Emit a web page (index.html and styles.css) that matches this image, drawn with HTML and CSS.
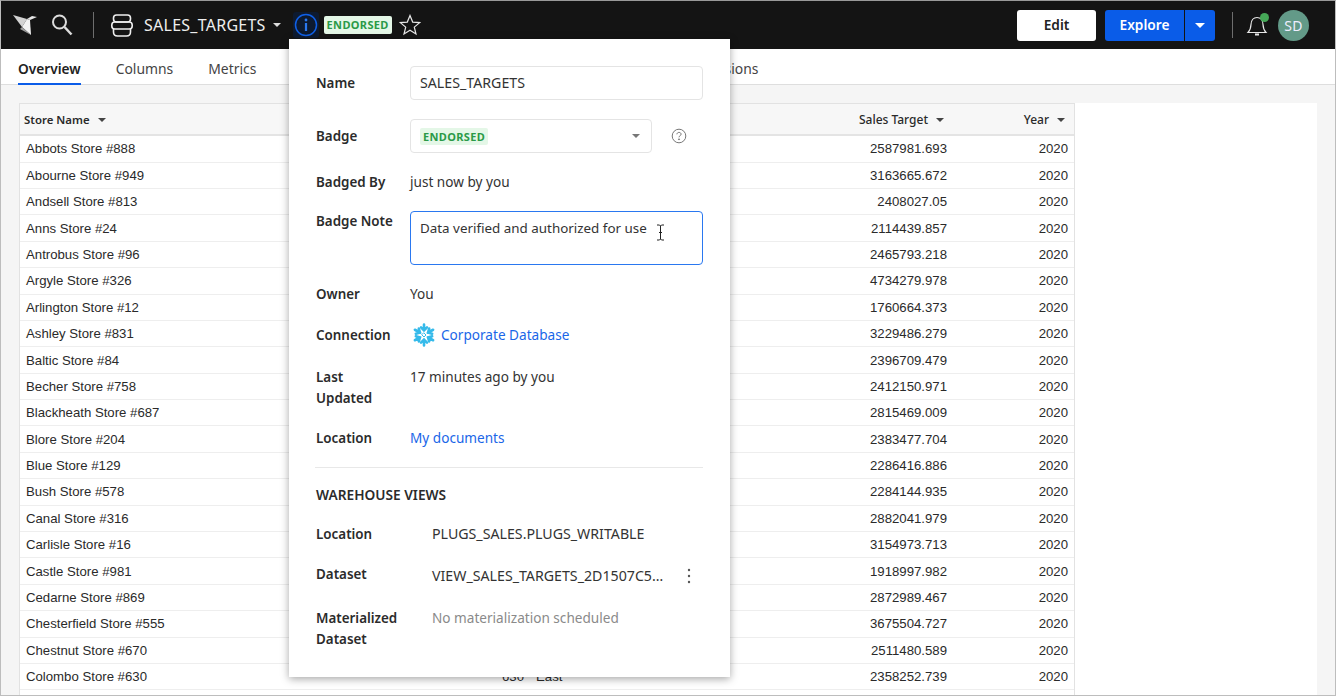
FILE: index.html
```html
<!DOCTYPE html>
<html lang="en">
<head>
<meta charset="utf-8">
<title>SALES_TARGETS</title>
<link rel="stylesheet" href="styles.css">
</head>
<body>
<div class="app">
  <header class="topbar">
    <svg class="logo" width="24" height="24" viewBox="0 0 24 24"><path d="M0 2l14 4-5 8z" fill="#d2d2d2"/><path d="M14 6l5-3 5 1-7 3z" fill="#e6e6e6"/><path d="M9 14l5-8 3 1 1 15z" fill="#f2f2f2"/><path d="M7 16l2-2 9 8z" fill="#9a9a9a"/></svg>
    <svg class="search" width="24" height="24" viewBox="0 0 24 24" fill="none" stroke="#dcdcdc" stroke-width="2"><circle cx="8.500" cy="9" r="6.500"/><path d="M13.500 14l7 7.500" stroke-width="2.500"/></svg>
    <span class="vsep first"></span>
    <svg class="db" width="22" height="23" viewBox="0 0 22 23" fill="none" stroke="#eee" stroke-width="1.600"><rect x="2.500" y="1" width="17" height="7" rx="3"/><rect x=".8" y="8" width="20.400" height="7" rx="3"/><path d="M2.500 15v3q0 4 4 4h9q4 0 4-4v-3"/></svg>
    <span class="ds-name">SALES_TARGETS</span>
    <span class="caret caret-light"></span>
    <span class="info-btn"><svg width="24" height="24" viewBox="0 0 24 24" fill="none"><circle cx="12" cy="12" r="10.500" stroke="#0f5fe6" stroke-width="1.500"/><rect x="10.900" y="10" width="2.200" height="8" fill="#2a78f0"/><circle cx="12" cy="7" r="1.400" fill="#2a78f0"/></svg></span>
    <span class="badge badge-top">ENDORSED</span>
    <svg class="star" width="22" height="22" viewBox="0 0 22 22" fill="none" stroke="#e8e8e8" stroke-width="1.200"><path d="M11 1.500l2.700 6.600 7 .5-5.400 4.500 1.700 6.900-6-3.800-6 3.800 1.700-6.900L1.300 8.600l7-.5z"/></svg>
    <span class="spacer"></span>
    <button class="btn btn-edit">Edit</button>
    <div class="split">
      <button class="btn btn-explore">Explore</button>
      <button class="btn btn-more"><span class="caret caret-white"></span></button>
    </div>
    <span class="vsep second"></span>
    <span class="bell"><svg width="22" height="24" viewBox="0 0 22 24" fill="none" stroke="#e8e8e8" stroke-width="1.200"><path d="M2 19.500c2-2 2.800-4 3-8 .2-4 2.500-7 6-7s5.800 3 6 7c.2 4 1 6 3 8z"/><path d="M9 21.500h4" stroke-width="2"/></svg><span class="dot"></span></span>
    <span class="avatar">SD</span>
  </header>

  <nav class="tabs">
    <span class="tab active">Overview</span>
    <span class="tab">Columns</span>
    <span class="tab">Metrics</span>
    <span class="tab tab-far">Permissions</span>
  </nav>

  <main class="content">
    <div class="sheet">
      <div class="table">
        <div class="row head">
          <span class="c-name">Store Name<i class="caret caret-dark"></i></span>
          <span class="c-key"></span><span class="c-region"></span>
          <span class="c-target">Sales Target<i class="caret caret-dark"></i></span>
          <span class="c-year">Year<i class="caret caret-dark"></i></span>
        </div>
        <div class="row"><span class="c-name">Abbots Store #888</span><span class="c-key"></span><span class="c-region"></span><span class="c-target">2587981.693</span><span class="c-year">2020</span></div>
        <div class="row"><span class="c-name">Abourne Store #949</span><span class="c-key"></span><span class="c-region"></span><span class="c-target">3163665.672</span><span class="c-year">2020</span></div>
        <div class="row"><span class="c-name">Andsell Store #813</span><span class="c-key"></span><span class="c-region"></span><span class="c-target">2408027.05</span><span class="c-year">2020</span></div>
        <div class="row"><span class="c-name">Anns Store #24</span><span class="c-key"></span><span class="c-region"></span><span class="c-target">2114439.857</span><span class="c-year">2020</span></div>
        <div class="row"><span class="c-name">Antrobus Store #96</span><span class="c-key"></span><span class="c-region"></span><span class="c-target">2465793.218</span><span class="c-year">2020</span></div>
        <div class="row"><span class="c-name">Argyle Store #326</span><span class="c-key"></span><span class="c-region"></span><span class="c-target">4734279.978</span><span class="c-year">2020</span></div>
        <div class="row"><span class="c-name">Arlington Store #12</span><span class="c-key"></span><span class="c-region"></span><span class="c-target">1760664.373</span><span class="c-year">2020</span></div>
        <div class="row"><span class="c-name">Ashley Store #831</span><span class="c-key"></span><span class="c-region"></span><span class="c-target">3229486.279</span><span class="c-year">2020</span></div>
        <div class="row"><span class="c-name">Baltic Store #84</span><span class="c-key"></span><span class="c-region"></span><span class="c-target">2396709.479</span><span class="c-year">2020</span></div>
        <div class="row"><span class="c-name">Becher Store #758</span><span class="c-key"></span><span class="c-region"></span><span class="c-target">2412150.971</span><span class="c-year">2020</span></div>
        <div class="row"><span class="c-name">Blackheath Store #687</span><span class="c-key"></span><span class="c-region"></span><span class="c-target">2815469.009</span><span class="c-year">2020</span></div>
        <div class="row"><span class="c-name">Blore Store #204</span><span class="c-key"></span><span class="c-region"></span><span class="c-target">2383477.704</span><span class="c-year">2020</span></div>
        <div class="row"><span class="c-name">Blue Store #129</span><span class="c-key"></span><span class="c-region"></span><span class="c-target">2286416.886</span><span class="c-year">2020</span></div>
        <div class="row"><span class="c-name">Bush Store #578</span><span class="c-key"></span><span class="c-region"></span><span class="c-target">2284144.935</span><span class="c-year">2020</span></div>
        <div class="row"><span class="c-name">Canal Store #316</span><span class="c-key"></span><span class="c-region"></span><span class="c-target">2882041.979</span><span class="c-year">2020</span></div>
        <div class="row"><span class="c-name">Carlisle Store #16</span><span class="c-key"></span><span class="c-region"></span><span class="c-target">3154973.713</span><span class="c-year">2020</span></div>
        <div class="row"><span class="c-name">Castle Store #981</span><span class="c-key"></span><span class="c-region"></span><span class="c-target">1918997.982</span><span class="c-year">2020</span></div>
        <div class="row"><span class="c-name">Cedarne Store #869</span><span class="c-key"></span><span class="c-region"></span><span class="c-target">2872989.467</span><span class="c-year">2020</span></div>
        <div class="row"><span class="c-name">Chesterfield Store #555</span><span class="c-key"></span><span class="c-region"></span><span class="c-target">3675504.727</span><span class="c-year">2020</span></div>
        <div class="row"><span class="c-name">Chestnut Store #670</span><span class="c-key"></span><span class="c-region"></span><span class="c-target">2511480.589</span><span class="c-year">2020</span></div>
        <div class="row"><span class="c-name">Colombo Store #630</span><span class="c-key">630</span><span class="c-region">East</span><span class="c-target">2358252.739</span><span class="c-year">2020</span></div>
        <div class="row"></div>
      </div>
    </div>
  </main>

  <aside class="popover">
    <dl class="fields">
      <dt class="lh-input">Name</dt>
      <dd><div class="input caps">SALES_TARGETS</div></dd>
      <dt class="lh-input">Badge</dt>
      <dd class="badge-row">
        <div class="input select"><span class="badge">ENDORSED</span><span class="caret caret-grey"></span></div>
        <svg class="help" width="16" height="16" viewBox="0 0 16 16" fill="none" stroke="#777" stroke-width="1"><circle cx="8" cy="8" r="6.800"/><path d="M5.900 6.300c.1-1.200 1-1.900 2.100-1.900 1.200 0 2.100.8 2.100 1.800 0 1.500-2.100 1.500-2.100 3.100"/><circle cx="8" cy="11.300" r=".5" fill="#777"/></svg>
      </dd>
      <dt class="mb18">Badged By</dt>
      <dd class="mb18">just now by you</dd>
      <dt>Badge Note</dt>
      <dd class="note-cell"><div class="input note">Data verified and authorized for use</div>
        <svg class="ibeam" width="9" height="17" viewBox="0 0 9 17" fill="none" stroke="#222" stroke-width="1"><path d="M1 1h2.500l1 1 1-1H8M4.500 2v13M1 16h2.500l1-1 1 1H8M3 8.500h3"/></svg></dd>
      <dt class="mb20">Owner</dt>
      <dd class="mb20">You</dd>
      <dt class="mb21">Connection</dt>
      <dd class="conn mb21">
        <svg width="24" height="24" viewBox="0 0 24 24" fill="none" stroke="#35baea" stroke-width="2.600" stroke-linecap="round">
          <defs><g id="flake-arm"><path d="M12 1.500v6M9 4.300l3 3 3-3"/></g></defs>
          <use href="#flake-arm"/>
          <use href="#flake-arm" transform="rotate(60 12 12)"/>
          <use href="#flake-arm" transform="rotate(120 12 12)"/>
          <use href="#flake-arm" transform="rotate(180 12 12)"/>
          <use href="#flake-arm" transform="rotate(240 12 12)"/>
          <use href="#flake-arm" transform="rotate(300 12 12)"/>
          <path d="M12 10l2 2-2 2-2-2z" stroke-width="1"/>
        </svg>
        <a class="link">Corporate Database</a>
      </dd>
      <dt>Last<br>Updated</dt>
      <dd>17 minutes ago by you</dd>
      <dt class="mb18">Location</dt>
      <dd class="mb18"><a class="link">My documents</a></dd>
    </dl>
    <hr class="rule">
    <h3 class="section">WAREHOUSE VIEWS</h3>
    <dl class="fields wh">
      <dt>Location</dt>
      <dd class="caps">PLUGS_SALES.PLUGS_WRITABLE</dd>
      <dt class="mb21">Dataset</dt>
      <dd class="ds-cell mb21"><span class="ellip caps">VIEW_SALES_TARGETS_2D1507C5…</span><svg width="4" height="16" viewBox="0 0 4 16" fill="#555"><circle cx="2" cy="2" r="1.200"/><circle cx="2" cy="8" r="1.200"/><circle cx="2" cy="14" r="1.200"/></svg></dd>
      <dt>Materialized<br>Dataset</dt>
      <dd class="muted">No materialization scheduled</dd>
    </dl>
  </aside>
</div>
</body>
</html>
```
FILE: styles.css
```css
* { box-sizing: border-box; }
html, body { height: 100%; margin: 0; }
body { font-family: "Noto Sans", sans-serif; color: #222; background: #fff; overflow: hidden; }
.app { position: relative; width: 1336px; height: 696px; display: flex; flex-direction: column; border: 1px solid #bdbdbd; border-top-color: #999; overflow: hidden; }

.topbar { flex: none; height: 48px; background: #141414; display: flex; align-items: center; padding-left: 12px; padding-right: 26px; }
.logo { margin-right: 14px; }
.vsep { width: 1px; height: 26px; background: #6e6e6e; }
.vsep.first { margin: 0 17px 0 18px; }
.vsep.second { margin: 0 13px 0 17px; }
.db { margin-right: 11px; }
.ds-name { color: #eee; font-size: 16px; letter-spacing: .25px; }
.caret { display: inline-block; width: 0; height: 0; border-left: 4px solid transparent; border-right: 4px solid transparent; border-top: 4px solid #555; }
.caret-light { border-top-color: #ddd; margin-left: 7px; }
.info-btn { width: 26px; height: 26px; margin-left: 12px; background: #0d1a30; border-radius: 3px; display: flex; align-items: center; justify-content: center; }
.badge { display: inline-block; background: #e4f7e7; color: #2a9a47; font-weight: 700; font-size: 11px; letter-spacing: .35px; line-height: 15px; padding: 1px 3px; border-radius: 2px; }
.badge-top { margin-left: 5px; line-height: 16px; }
.star { margin-left: 7px; }
.spacer { flex: 1; }
.btn { font-family: inherit; border: 0; font-weight: 600; font-size: 13.7px; height: 31px; border-radius: 3px; padding: 0 0 2px; }
.btn-edit { width: 79px; background: #fff; color: #222; margin-right: 9px; }
.split { display: flex; gap: 1px; }
.btn-explore { width: 79px; background: #0a5ce8; color: #fff; border-radius: 3px 0 0 3px; }
.btn-more { width: 30px; background: #0a5ce8; border-radius: 0 3px 3px 0; display: flex; align-items: center; justify-content: center; padding: 0; }
.caret-white { border-top-color: #fff; border-left-width: 5px; border-right-width: 5px; border-top-width: 5px; }
.bell { position: relative; width: 22px; height: 24px; margin-right: 10px; }
.dot { position: absolute; top: 0; right: -1px; width: 9px; height: 9px; border-radius: 50%; background: #45a857; }
.avatar { width: 31px; height: 31px; border-radius: 50%; background: #639a88; color: #eef; font-size: 14px; display: flex; align-items: center; justify-content: center; letter-spacing: .3px; }

.tabs { flex: none; height: 36px; display: flex; gap: 35px; padding-left: 17px; border-bottom: 1px solid #dedede; background: #fff; }
.tab { font-size: 13.9px; color: #444; line-height: 39px; height: 36px; }
.tab.active { font-size: 13.7px; color: #222; font-weight: 600; border-bottom: 2px solid #0a5ce8; }
.tab-far { margin-left: 388px; }

.content { flex: 1; min-height: 0; background: #f5f5f5; padding: 18px 18px 0; overflow: hidden; }
.sheet { width: 1298px; height: 100%; background: #fff; }
.table { width: 1056px; border-left: 1px solid #e2e2e2; border-right: 1px solid #e2e2e2; background: #fff; }
.row { display: flex; height: 26.4px; align-items: center; border-bottom: 1px solid #eee; font-family: "Liberation Sans", sans-serif; font-size: 13.2px; color: #2a2a2a; }
.row.head { height: 33.200px; background: #f7f7f7; border-top: 1px solid #e2e2e2; border-bottom: 2px solid #e4e4e4; font-family: "Noto Sans", sans-serif; font-weight: 500; font-size: 12px; }
.c-name { width: 450px; padding-left: 6px; }
.head .c-name { padding-left: 4px; font-weight: 600; font-size: 11.4px; }
.c-key { width: 60px; padding-right: 6px; text-align: right; }
.c-region { width: 180px; padding-left: 6px; }
.c-target { width: 244px; padding-right: 7px; text-align: right; }
.c-year { width: 120px; padding-right: 6px; text-align: right; }
.head .c-target { padding-right: 10px; }
.head .c-year { padding-right: 9px; }
.caret-dark { margin-left: 8px; vertical-align: 2px; border-top-color: #444; }

.popover { position: absolute; left: 288px; top: 38px; width: 441px; height: 638px; background: #fff; box-shadow: 0 2px 8px rgba(0,0,0,.35); padding: 27px 27px 0; font-size: 13.6px; }
.fields { display: grid; grid-template-columns: 94px 1fr; margin: 0; line-height: 21px; }
.fields dt { font-weight: 600; font-size: 13.4px; color: #2b2b2b; margin: 0 0 19px; }
.fields dd { margin: 0 0 19px; color: #333; line-height: 19px; }
.fields .mb18 { margin-bottom: 18px; }
.fields .mb20 { margin-bottom: 20px; }
.fields .mb21 { margin-bottom: 21px; }
.caps { font-size: 14.2px; }
.input { border: 1px solid #e4e4e4; border-radius: 4px; height: 34px; padding: 0 9px 2px; display: flex; align-items: center; background: #fff; }
.lh-input { line-height: 34px; }
.badge-row { display: flex; align-items: center; }
.select { width: 242px; justify-content: space-between; padding: 0 11px 0 9px; }
.caret-grey { border-top-color: #777; }
.help { margin-left: 19px; }
.note-cell { position: relative; }
.note { height: 54px; border-color: #2a78f0; align-items: flex-start; padding: 7px 9px 0; font-size: 13.4px; }
.ibeam { position: absolute; left: 246px; top: 13px; }
.conn { display: flex; align-items: center; gap: 5px; height: 21px; padding-bottom: 2px; margin-left: 2px !important; }
.link { color: #1a66e8; }
.rule { border: 0; border-top: 1px solid #e8e8e8; margin: 0 0 16px -1px; }
.section { margin: 0 0 19px; font-size: 13.7px; font-weight: 600; line-height: 21px; color: #2b2b2b; }
.wh { grid-template-columns: 116px 1fr; }
.ds-cell { display: flex; align-items: center; gap: 21px; height: 23px; }
.ellip { width: 234px; white-space: nowrap; }
.muted { color: #8a8a8a !important; }
```
